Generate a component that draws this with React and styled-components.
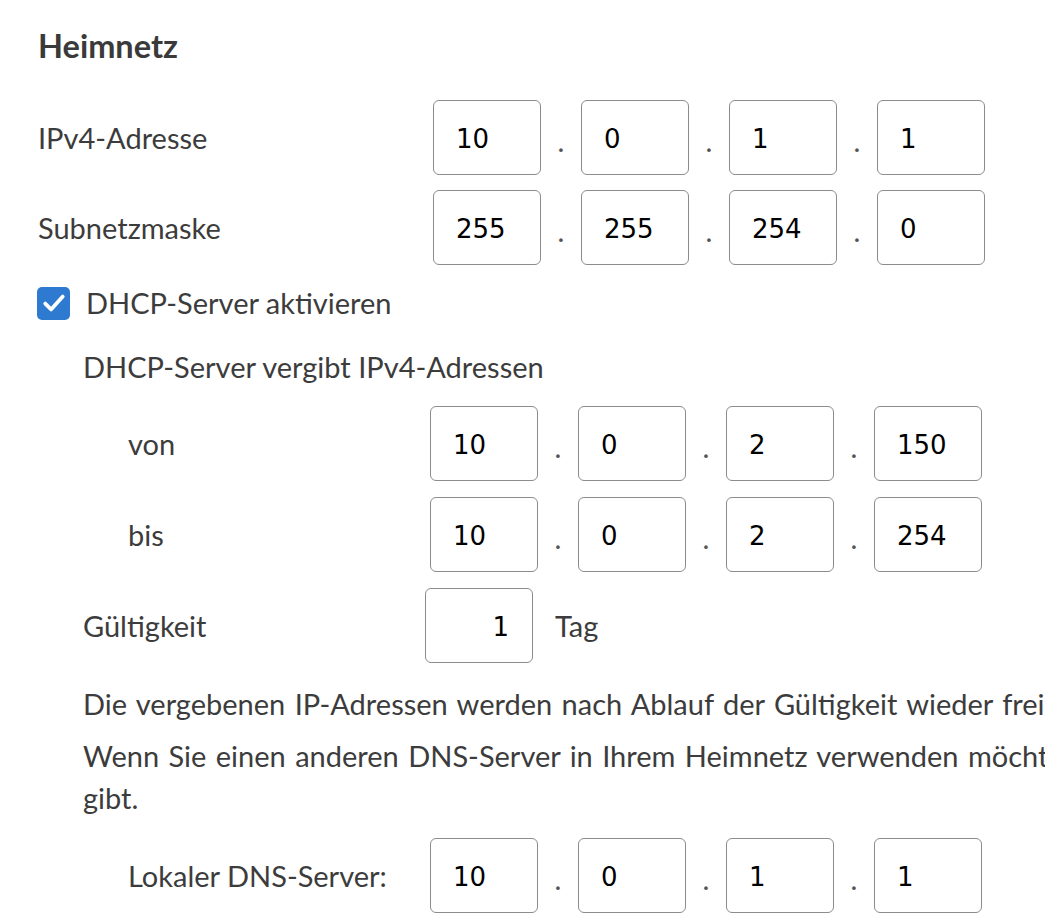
import React from "react";
import styled, { createGlobalStyle } from "styled-components";

const Global = createGlobalStyle`
  html, body { margin: 0; padding: 0; overflow: hidden; background: #ffffff; }
  body { font-family: "Lato", "Noto Sans", sans-serif; color: #3c3c3c; }
  * { box-sizing: border-box; }
`;

const Page = styled.div`
  width: 1045px;
  height: 924px;
  overflow: hidden;
  padding: 26px 0 0 38px;
`;

const Heading = styled.h2`
  margin: 0 0 34px 0;
  font-size: 32.5px;
  line-height: 40px;
  font-weight: 700;
  color: #3a3a3a;
`;

const Row = styled.div`
  display: grid;
  grid-template-columns: ${(p) => p.$labelWidth}px auto auto;
  align-items: center;
  justify-content: start;
  height: 75px;
  margin-top: ${(p) => p.$mt || 0}px;
  padding-left: ${(p) => p.$indent || 0}px;
`;

const Label = styled.span`
  font-size: 29px;
  line-height: 42px;
  color: #3c3c3c;
  white-space: nowrap;
`;

const IpGroup = styled.div`
  display: flex;
  align-items: center;
`;

const Octet = styled.input`
  width: 108px;
  height: 75px;
  border: 1px solid #8c8c8c;
  border-radius: 6px;
  padding: 2px ${(p) => (p.$right ? 23 : 0)}px 0 ${(p) => (p.$right ? 0 : 22)}px;
  font-family: "DejaVu Sans", "Verdana", sans-serif;
  font-size: 26px;
  color: #000;
  background: #fff;
  text-align: ${(p) => (p.$right ? "right" : "left")};
  outline: none;
`;

const Dot = styled.span`
  width: 40px;
  text-align: center;
  font-size: 29px;
  line-height: 42px;
  color: #555;
  padding-top: 6px;
`;

const Unit = styled.span`
  font-size: 29px;
  line-height: 42px;
  margin-left: 22px;
  color: #3c3c3c;
`;

const CheckRow = styled.label`
  display: flex;
  align-items: center;
  height: 42px;
  margin-top: 17px;
  gap: 16px;
  font-size: 29px;
  line-height: 42px;
`;

const CheckBox = styled.span`
  width: 33px;
  height: 33px;
  margin-left: -1px;
  border-radius: 5px;
  background: #2e7ad1;
  display: flex;
  align-items: center;
  justify-content: center;
`;

const Section = styled.div`
  padding-left: 45px;
`;

const SubTitle = styled.div`
  font-size: 29px;
  line-height: 42px;
  margin-top: 22px;
  white-space: nowrap;
`;

const Para = styled.p`
  margin: ${(p) => p.$mt}px 0 0 0;
  font-size: 29px;
  line-height: 42px;
  word-spacing: 2px;
  white-space: nowrap;
`;

function IpField({ values }) {
  return (
    <IpGroup>
      {values.map((v, i) => (
        <React.Fragment key={i}>
          {i > 0 && <Dot>.</Dot>}
          <Octet defaultValue={v} />
        </React.Fragment>
      ))}
    </IpGroup>
  );
}

export default function App() {
  return (
    <>
      <Global />
      <Page>
        <Heading>Heimnetz</Heading>
        <Row $labelWidth={395}>
          <Label>IPv4-Adresse</Label>
          <IpField values={["10", "0", "1", "1"]} />
        </Row>
        <Row $labelWidth={395} $mt={15}>
          <Label>Subnetzmaske</Label>
          <IpField values={["255", "255", "254", "0"]} />
        </Row>
        <CheckRow>
          <CheckBox>
            <svg width="28" height="28" viewBox="0 0 24 24" fill="none">
              <polyline
                points="4.5,12.5 9.5,17.5 19.5,6.5"
                stroke="#fff"
                strokeWidth="3.2"
                strokeLinecap="round"
                strokeLinejoin="round"
              />
            </svg>
          </CheckBox>
          <span>DHCP-Server aktivieren</span>
        </CheckRow>
        <Section>
          <SubTitle>DHCP-Server vergibt IPv4-Adressen</SubTitle>
          <Row $labelWidth={302} $indent={45} $mt={18}>
            <Label>von</Label>
            <IpField values={["10", "0", "2", "150"]} />
          </Row>
          <Row $labelWidth={302} $indent={45} $mt={16}>
            <Label>bis</Label>
            <IpField values={["10", "0", "2", "254"]} />
          </Row>
          <Row $labelWidth={342} $mt={16}>
            <Label>Gültigkeit</Label>
            <Octet $right defaultValue="1" />
            <Unit>Tag</Unit>
          </Row>
          <Para $mt={20}>
            Die vergebenen IP-Adressen werden nach Ablauf der Gültigkeit wieder frei.
          </Para>
          <Para $mt={10}>
            Wenn Sie einen anderen DNS-Server in Ihrem Heimnetz verwenden möchten, geben Sie hier die IP-Adresse ein, die der DHCP-Server weiter
            <br />
            gibt.
          </Para>
          <Row $labelWidth={302} $indent={45} $mt={19}>
            <Label>Lokaler DNS-Server:</Label>
            <IpField values={["10", "0", "1", "1"]} />
          </Row>
        </Section>
      </Page>
    </>
  );
}
